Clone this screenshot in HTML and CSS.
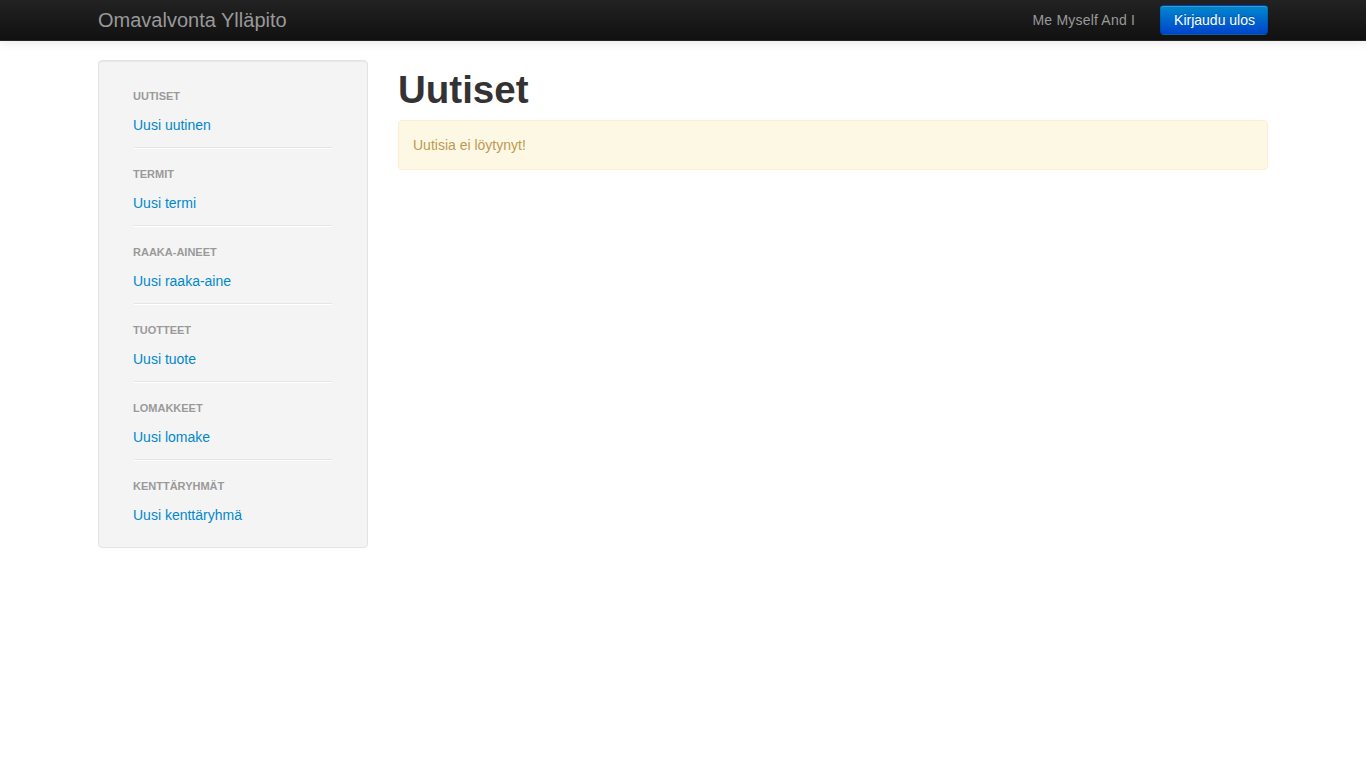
FILE: index.html
```html
<!DOCTYPE html>
<html lang="fi">
<head>
<meta charset="utf-8">
<title>Omavalvonta Ylläpito</title>
<link rel="stylesheet" href="styles.css">
</head>
<body>
<header class="navbar">
  <div class="container navbar-inner">
    <a class="brand" href="#">Omavalvonta Ylläpito</a>
    <div class="navbar-right">
      <a class="user" href="#">Me Myself And I</a>
      <a class="btn-primary" href="#">Kirjaudu ulos</a>
    </div>
  </div>
</header>
<main class="container layout">
  <aside class="well">
    <ul class="nav-list">
      <li class="nav-header">Uutiset</li>
      <li><a href="#">Uusi uutinen</a></li>
      <li class="divider"></li>
      <li class="nav-header">Termit</li>
      <li><a href="#">Uusi termi</a></li>
      <li class="divider"></li>
      <li class="nav-header">Raaka-aineet</li>
      <li><a href="#">Uusi raaka-aine</a></li>
      <li class="divider"></li>
      <li class="nav-header">Tuotteet</li>
      <li><a href="#">Uusi tuote</a></li>
      <li class="divider"></li>
      <li class="nav-header">Lomakkeet</li>
      <li><a href="#">Uusi lomake</a></li>
      <li class="divider"></li>
      <li class="nav-header">Kenttäryhmät</li>
      <li><a href="#">Uusi kenttäryhmä</a></li>
    </ul>
  </aside>
  <section class="content">
    <h1>Uutiset</h1>
    <div class="alert">Uutisia ei löytynyt!</div>
  </section>
</main>
</body>
</html>
```
FILE: styles.css
```css
* { box-sizing: border-box; }
html, body { margin: 0; padding: 0; }
body {
  font-family: "Liberation Sans", Arial, Helvetica, sans-serif;
  font-size: 14px;
  line-height: 20px;
  color: #333;
  background: #fff;
}
a { text-decoration: none; }
.container { width: 1170px; margin: 0 auto; }

.navbar {
  height: 41px;
  background: linear-gradient(to bottom, #222222, #111111);
  border-bottom: 1px solid #252525;
  box-shadow: 0 1px 10px rgba(0,0,0,0.1);
}
.navbar-inner {
  display: flex;
  align-items: flex-start;
  justify-content: space-between;
  height: 40px;
}
.brand {
  display: block;
  padding: 10px 0;
  font-size: 20px;
  line-height: 20px;
  font-weight: normal;
  color: #999;
}
.navbar-right {
  display: flex;
  align-items: flex-start;
  gap: 25px;
}
.user {
  display: block;
  padding: 10px 0;
  color: #999;
  line-height: 20px;
  letter-spacing: 0.2px;
}
.btn-primary {
  display: block;
  margin-top: 5px;
  padding: 4px 12px 4px 13px;
  line-height: 20px;
  color: #fff;
  text-shadow: 0 -1px 0 rgba(0,0,0,0.25);
  background: linear-gradient(to bottom, #0088cc, #0044cc);
  border: 1px solid #0044cc;
  border-color: rgba(0,0,0,0.1) rgba(0,0,0,0.1) rgba(0,0,0,0.25);
  border-radius: 4px;
  box-shadow: inset 0 1px 0 rgba(255,255,255,0.2), 0 1px 2px rgba(0,0,0,0.05);
}

.layout {
  display: flex;
  align-items: flex-start;
  gap: 30px;
  padding-top: 19px;
}
.well {
  width: 270px;
  flex: none;
  padding: 19px;
  background: #f4f4f4;
  border: 1px solid #e3e3e3;
  border-radius: 4px;
  box-shadow: inset 0 1px 1px rgba(0,0,0,0.05);
}
.nav-list {
  list-style: none;
  margin: 0;
  padding: 0 15px;
}
.nav-header {
  padding: 6px 0;
  font-size: 11px;
  font-weight: bold;
  line-height: 20px;
  color: #999;
  text-transform: uppercase;
  text-shadow: 0 1px 0 rgba(255,255,255,0.5);
}
.nav-list a {
  display: block;
  padding: 3px 0;
  color: #0088cc;
}
.divider {
  height: 2px;
  margin: 9px 1px;
  background: #e5e5e5;
  border-bottom: 1px solid #fff;
}

.content { flex: 1; }
h1 {
  margin: 10px 0;
  font-size: 38.5px;
  line-height: 40px;
  font-weight: bold;
  color: #333;
}
.alert {
  padding: 14px;
  color: #c09853;
  background: #fcf8e3;
  border: 1px solid #fbeed5;
  border-radius: 4px;
  line-height: 20px;
}
```
